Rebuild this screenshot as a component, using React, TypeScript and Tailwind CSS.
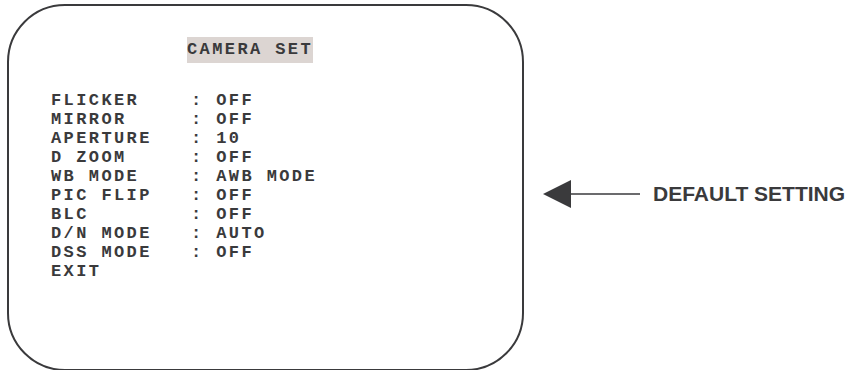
const rows = [
  { label: "FLICKER", value: "OFF" },
  { label: "MIRROR", value: "OFF" },
  { label: "APERTURE", value: "10" },
  { label: "D ZOOM", value: "OFF" },
  { label: "WB MODE", value: "AWB MODE" },
  { label: "PIC FLIP", value: "OFF" },
  { label: "BLC", value: "OFF" },
  { label: "D/N MODE", value: "AUTO" },
  { label: "DSS MODE", value: "OFF" },
];

const mono = "font-['Liberation_Mono',monospace] font-bold text-[17px] tracking-[2.4px] text-[#3a3a3c]";

export default function App() {
  return (
    <div className="w-[848px] h-[370px] bg-white flex overflow-hidden">
      {/* OSD menu frame */}
      <div className="ml-[7px] mt-[4px] w-[517px] h-[367px] shrink-0 border-[2.5px] border-[#3a3a3c] rounded-[58px] flex flex-col">
        <div className="mt-[30px] pl-[178px]">
          <span className={`${mono} inline-block bg-[#dcd5d2] leading-[26px]`}>CAMERA SET</span>
        </div>

        <div className={`${mono} mt-[28px] pl-[42px] leading-[19px] flex flex-col`}>
          {rows.map((r) => (
            <div key={r.label} className="flex whitespace-pre">
              <span className="w-[140px]">{r.label}</span>
              <span>: {r.value}</span>
            </div>
          ))}
          <div>EXIT</div>
        </div>
      </div>

      {/* arrow + caption */}
      <div className="flex items-center mt-[4px] ml-[19px] h-[380px]">
        <svg width="98" height="28" viewBox="0 0 98 28" className="shrink-0">
          <polygon points="0,14 28,0 28,28" fill="#3a3a3c" />
          <line x1="28" y1="14" x2="97" y2="14" stroke="#3a3a3c" strokeWidth="1.6" />
        </svg>
        <span className="ml-[12px] font-['Liberation_Sans',Arial,sans-serif] font-bold text-[21px] text-[#3a3a3c] whitespace-nowrap">
          DEFAULT SETTING
        </span>
      </div>
    </div>
  );
}
